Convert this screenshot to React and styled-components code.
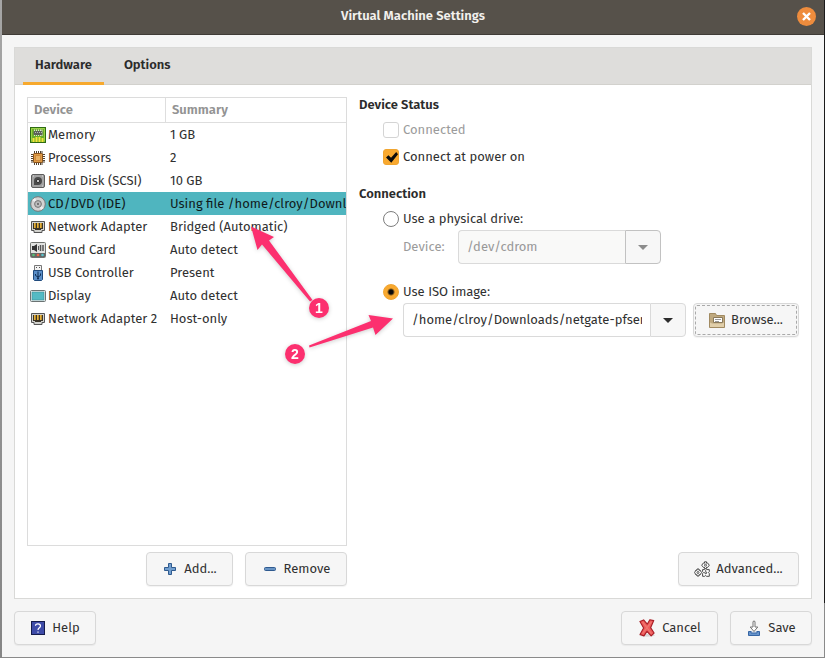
import React, { useState } from "react";
import styled, { createGlobalStyle, css } from "styled-components";

const GlobalStyle = createGlobalStyle`
  *, *::before, *::after { box-sizing: border-box; }
  body { margin: 0; }
  body, button, input, table {
    font-family: "Fira Sans", "Noto Sans", sans-serif;
    font-size: 13px;
    line-height: 20px;
    color: #303030;
  }
`;

const Desktop = styled.div`
  position: relative;
  display: flex;
  min-height: 100vh;
  padding: 0 1px 1px 2px;
  background:
    linear-gradient(#1b1b1b, #1b1b1b) right top / 1px calc(100% - 55px) no-repeat,
    linear-gradient(#a6a6a6, #858585) left top / 2px 100% no-repeat,
    #8a8a8a;
`;

const Dialog = styled.main`
  flex: 1;
  min-width: 0;
  display: flex;
  flex-direction: column;
  background: #f5f5f5;
`;

const TitleBar = styled.header`
  display: grid;
  grid-template-columns: 1fr auto 1fr;
  align-items: center;
  height: 35px;
  padding: 0 8px 2px;
  background: #56514a;
  border-bottom: 1px solid #3f3b36;
`;

const Title = styled.h1`
  grid-column: 2;
  margin: 0;
  font-size: 13px;
  font-weight: 600;
  color: #f2f0ed;
`;

const CloseButton = styled.button`
  justify-self: end;
  display: flex;
  width: 19px;
  height: 19px;
  padding: 0;
  border: 0;
  border-radius: 50%;
  background: #ee8c3d;
`;

const Content = styled.div`
  flex: 1;
  display: flex;
  flex-direction: column;
  gap: 12px;
  padding: 12px;
`;

const Notebook = styled.section`
  flex: 1;
  display: flex;
  flex-direction: column;
  border: 1px solid #d9d9d7;
  background: #fff;
`;

const TabList = styled.div`
  display: flex;
  height: 37px;
  padding: 0 8px;
  background: #dedddb;
  border-bottom: 1px solid #d2d1cd;
`;

const Tab = styled.button`
  height: 37px;
  padding: 0 12px;
  margin-right: 8px;
  border: 0;
  border-bottom: 3px solid ${(p) => (p.$active ? "#f7a92e" : "transparent")};
  background: none;
  font-weight: 600;
  color: #2b2b2b;
`;

const Page = styled.div`
  flex: 1;
  display: grid;
  grid-template-columns: minmax(0, 8fr) minmax(0, 11fr);
  gap: 12px;
  padding: 12px;
`;

const Column = styled.div`
  display: flex;
  flex-direction: column;
  gap: 6px;
`;

const DeviceList = styled.div`
  flex: 1;
  border: 1px solid #dcdcdc;
  background: #fff;
`;

const DeviceTable = styled.table`
  width: 100%;
  table-layout: fixed;
  border-collapse: separate;
  border-spacing: 0;
`;

const HeadCell = styled.th`
  width: ${(p) => (p.$first ? "138px" : "auto")};
  height: 25px;
  padding: 0 6px;
  border-bottom: 1px solid #dedede;
  border-right: ${(p) => (p.$first ? "1px solid #dedede" : "0")};
  text-align: left;
  font-weight: 600;
  color: #939393;
`;

const DeviceRow = styled.tr`
  background: ${(p) => (p.$selected ? "#4fb5bf" : "transparent")};
  color: ${(p) => (p.$selected ? "#101a1b" : "inherit")};
`;

const Cell = styled.td`
  height: 23px;
  padding: 0 0 0 4px;
  overflow: hidden;
  white-space: nowrap;
`;

const NameCell = styled(Cell)`
  padding: 0 0 0 2px;
  overflow: visible;
`;

const DeviceName = styled.span`
  display: flex;
  align-items: center;
  gap: 2px;
`;

const ButtonRow = styled.div`
  display: flex;
  justify-content: flex-end;
  gap: 12px;
`;

const Footer = styled.footer`
  display: flex;
  gap: 12px;
`;

const PushButton = styled.button`
  display: flex;
  align-items: center;
  justify-content: center;
  gap: 6px;
  flex: none;
  height: 34px;
  min-width: 82px;
  padding: 0;
  border: 1px solid #d8d8d8;
  border-radius: 4px;
  background: #f6f6f6;
  box-shadow: 0 1px 1px rgba(0, 0, 0, 0.05);
  white-space: nowrap;
  width: ${(p) => p.$width}px;
  margin-right: ${(p) => (p.$pushRest ? "auto" : "0")};
  ${(p) =>
    p.$focused &&
    css`
      outline: 1px dashed #a9a9a9;
      outline-offset: -3px;
    `}
`;

const Settings = styled.div`
  flex: 1;
  display: flex;
  flex-direction: column;
  gap: 19px;
`;

const Group = styled.section`
  display: flex;
  flex-direction: column;
  gap: 7px;
`;

const GroupTitle = styled.h2`
  margin: 0;
  font-size: 13px;
  line-height: 16px;
  font-weight: 600;
  color: #2b2b2b;
`;

const Choices = styled.div`
  display: flex;
  flex-direction: column;
  gap: ${(p) => (p.$gap)}px;
  padding-left: 24px;
`;

const Choice = styled.label`
  display: flex;
  align-items: center;
  gap: 4px;
  color: ${(p) => (p.$disabled ? "#9b9b9b" : "inherit")};
`;

const CheckBox = styled.input.attrs({ type: "checkbox" })`
  appearance: none;
  width: 16px;
  height: 16px;
  margin: 0;
  border: 1px solid #d4d4d4;
  border-radius: 3px;
  background: #fff;
  display: grid;
  &:checked {
    border-color: #f0a530;
    background: #f9a92f;
  }
  &:checked::before {
    content: "";
    margin: 2px 0 1px 2px;
    background: #0b0b0b;
    clip-path: polygon(0 50%, 20% 30%, 42% 52%, 85% 0, 100% 20%, 44% 98%);
  }
`;

const Radio = styled.input.attrs({ type: "radio" })`
  appearance: none;
  width: 16px;
  height: 16px;
  margin: 0;
  border: 1px solid #7d7d7d;
  border-radius: 50%;
  background: #fff;
  &:checked {
    border-color: #f0a530;
    background: radial-gradient(circle, #0b0b0b 2px, #f9a92f 4px);
  }
`;

const Option = styled.div`
  display: flex;
  flex-direction: column;
  gap: 1px;
`;

const FieldRow = styled.div`
  display: flex;
  align-items: center;
  gap: 7px;
  padding-left: 20px;
`;

const FieldLabel = styled.label`
  width: 48px;
  color: #9b9b9b;
`;

const Combo = styled.div`
  display: flex;
  height: 34px;
  min-width: 0;
  flex: ${(p) => (p.$fill ? "1" : "0 1 203px")};
`;

const ComboInput = styled.input`
  flex: 1;
  min-width: 0;
  padding: 0 8px;
  border: 1px solid #dadada;
  border-right: 0;
  border-radius: 4px 0 0 4px;
  background: #fff;
  &:disabled {
    background: #f9f9f8;
    color: #989898;
  }
`;

const ComboArrow = styled.button`
  display: flex;
  align-items: center;
  justify-content: center;
  width: 36px;
  padding: 0;
  border: 1px solid #dadada;
  border-radius: 0 4px 4px 0;
  background: #f7f7f7;
  color: #2d2d2d;
  &:disabled {
    border-color: #c2c2c2;
    color: #8c8c8c;
  }
`;

const Callouts = styled.svg`
  position: absolute;
  left: 240px;
  top: 215px;
  pointer-events: none;
  filter: drop-shadow(0 1px 2px rgba(0, 0, 0, 0.2));
  font: bold 14px "Liberation Sans", sans-serif;
`;

const Glyph = styled.svg.attrs({ viewBox: "0 0 16 16", fill: "none", "aria-hidden": true })`
  flex: none;
  width: ${(p) => (p.$large ? 18 : 16)}px;
  height: ${(p) => (p.$large ? 18 : 16)}px;
`;

const MemoryIcon = () => (
  <Glyph>
    <rect x=".5" y=".5" width="15" height="15" fill="#6cae28" stroke="#2e6b12" />
    <path d="M1.500 14.500V1.500H14.500V14.500" stroke="#9bd447" />
    <path d="M4.500 2.500V9M6.500 2.500V9M8.500 2.500V9M10.500 2.500V9M12 2.500V9" stroke="#dcdcdc" />
    <rect x="3.500" y="4" width="9" height="4" rx="1" fill="#5c6259" />
    <path d="M5 5.500H12" stroke="#b9bdb5" strokeDasharray="1 1" />
    <path d="M3.500 15V11M6.500 15V10M9.500 15V10M12.500 15V11" stroke="#f4e43c" strokeWidth="2" />
  </Glyph>
);

const ProcessorIcon = () => (
  <Glyph>
    <path d="M4.500 1V15M6.500 1V15M8.500 1V15M10.500 1V15M12 1V15M1 4.500H15M1 6.500H15M1 8.500H15M1 10.500H15M1 12H15" stroke="#514331" />
    <rect x="3.500" y="3.500" width="9" height="9" rx="1" fill="#dd9b45" stroke="#8b521b" />
    <rect x="5.500" y="5.500" width="5" height="5" fill="#e9b162" stroke="#cf883b" />
  </Glyph>
);

const DiskIcon = () => (
  <Glyph>
    <rect x="1.500" y="1.500" width="13" height="13" rx="1.500" fill="#a2a2a2" stroke="#5d5d5d" />
    <path d="M4 8a4 4 0 1 1 4 4H4Z" fill="#4a4a4a" />
    <circle cx="8" cy="8" r="1.700" fill="#c5c5c5" stroke="#353535" />
    <path d="M3 3h1M12 3h1M12 13h1" stroke="#ddd" />
  </Glyph>
);

const DiscIcon = () => (
  <Glyph>
    <circle cx="8" cy="8" r="7.300" fill="#d2d2d2" stroke="#777" />
    <path d="M8 8 2 4 5 2ZM8 8l6 4-3 2Z" fill="#efefef" />
    <circle cx="8" cy="8" r="3.400" fill="#b7b7b7" stroke="#777" />
    <circle cx="8" cy="8" r="1.400" fill="#444" stroke="#eee" strokeWidth=".6" />
  </Glyph>
);

const NetworkIcon = () => (
  <Glyph>
    <path d="M1.500 2.500h13v9H12v2H4v-2H1.500Z" fill="#d2d2ce" stroke="#555" />
    <path d="M3 4h10v6h-2v1H5v-1H3Z" fill="#3b3427" />
    <path d="M5 4v5M8 4v5M11 4v5" stroke="#e3b13c" strokeWidth="2" />
    <path d="M5.500 4v5M8.500 4v5M11.500 4v5" stroke="#b78a28" />
  </Glyph>
);

const SoundIcon = () => (
  <Glyph>
    <rect x=".5" y=".5" width="15" height="15" rx="1" fill="#e2e3e1" stroke="#70736f" />
    <path d="M2 4h2l3-2v8L4 8H2Z" fill="#333" />
    <path d="M8.500 4v4" stroke="#555" />
    <path d="M10.500 3v6M13 3v6" stroke="#555" strokeWidth="1.500" />
    <path d="M1 11h14v4H1Z" fill="#666" />
    <circle cx="3.500" cy="13" r="1.300" fill="#52c174" />
    <circle cx="8" cy="13" r="1.300" fill="#f16745" />
    <circle cx="12.500" cy="13" r="1.300" fill="#59c4cc" />
  </Glyph>
);

const UsbIcon = () => (
  <Glyph>
    <path d="M4.500 5V.5h7V5" fill="#f2f2f2" stroke="#777" />
    <path d="M6 2h1v1H6ZM9 2h1v1H9Z" fill="#555" />
    <path d="M3.500 5.500h9v9l-1 1h-7l-1-1Z" fill="#5b8fc8" stroke="#214b7d" />
    <path d="M8 6.500V14M5.500 9v1.500L8 12l2.500-1.500V8.500" stroke="#102f55" />
    <circle cx="8" cy="13.500" r="1" fill="#102f55" />
  </Glyph>
);

const DisplayIcon = () => (
  <Glyph>
    <rect x=".5" y="2.500" width="15" height="11" rx="1" fill="#eee" stroke="#6b7373" />
    <rect x="2" y="4" width="12" height="8" fill="#54bac4" stroke="#398c94" strokeWidth=".6" />
  </Glyph>
);

const AddIcon = () => (
  <Glyph>
    <path d="M6.500 2.500h3v4h4v3h-4v4h-3v-4h-4v-3h4Z" fill="#729fcf" stroke="#2f5a8f" strokeLinejoin="round" />
  </Glyph>
);

const RemoveIcon = () => (
  <Glyph>
    <rect x="2.500" y="6.500" width="11" height="3" rx="1" fill="#6894c4" stroke="#2f5a8f" />
  </Glyph>
);

const FolderIcon = () => (
  <Glyph>
    <path d="M.5 15.500v-14h6l1 2h8v12Z" fill="#bfa97f" stroke="#a18a61" strokeLinejoin="round" />
    <path d="M4.500 5.500h9v5h-9Z" fill="#fff" stroke="#89795b" />
    <path d="M6 7.500h6M6 9.500h4" stroke="#999" />
    <path d="M1 15V10.500l2 1h10l2-1V15Z" fill="#e1cfaa" />
  </Glyph>
);

const GearsIcon = () => (
  <Glyph>
    <g stroke="#4a4a4a" fill="#fff" strokeLinejoin="round">
      <path d="M10.500 .8h2v1.400l1-.3 1.800 2.300-1.800 2.300-1-.3v1.400h-2V6.200l-1 .3L7.700 4.200l1.800-2.300 1 .3Z" />
      <path d="M3 8h2v1.300l1-.3 1.500 2.500L6 14l-1-.3V15H3v-1.300L2 14 .6 11.500 2 9l1 .3Z" />
      <path d="M8.600 8.600h2l1 .8 1-.8h2.700v2l-.8 1 .8 1v2.700h-2.700l-1-.8-1 .8h-2v-2.700l.8-1-.8-1Z" />
    </g>
    <circle cx="11.500" cy="4.200" r="1" stroke="#555" />
    <circle cx="4" cy="11.500" r="1" stroke="#555" />
    <circle cx="11.700" cy="11.700" r="1" stroke="#444" />
  </Glyph>
);

const HelpIcon = () => (
  <Glyph>
    <rect x="1.500" y="1.500" width="13" height="13" fill="#3e4ba8" stroke="#151c4b" />
    <path d="M5.500 5.800C5.500 3.200 10.500 3.200 10.500 6 10.500 7.800 8 7.800 8 10M8 11.500v1.300" stroke="#fff" strokeWidth="1.200" />
  </Glyph>
);

const CancelIcon = () => (
  <Glyph $large>
    <ellipse cx="8" cy="14.500" rx="7" ry="1.200" fill="#d9d9d9" />
    <path d="M1.700 2.200 5 .8 8.200 4.600 10.500 .7 14 1.400 11.200 7.700 14.300 12.500 11.700 15 8 11 5.300 15 1.800 13.800 5 8Z" fill="#ee5a5a" stroke="#a71d25" strokeLinejoin="round" />
    <path d="M4 2.500 12 13M12 2.500 4 13" stroke="#f07771" />
  </Glyph>
);

const SaveIcon = () => (
  <Glyph>
    <path d="M2.500 11.500h11v4h-11Z" fill="#6794cb" stroke="#3565a4" />
    <path d="M5 11v2h6v-2" fill="#dbe5f1" stroke="#3565a4" />
    <path d="M7 1.500Q8 .5 9 1.500V7h2.800L8 11.500 4.200 7H7Z" fill="#fff" stroke="#747474" strokeLinejoin="round" />
  </Glyph>
);

const Caret = () => (
  <svg width="10" height="5" viewBox="0 0 10 5" aria-hidden="true">
    <path d="M0 0h10L5 5Z" fill="currentColor" />
  </svg>
);

const devices = [
  ["Memory", "1 GB", MemoryIcon],
  ["Processors", "2", ProcessorIcon],
  ["Hard Disk (SCSI)", "10 GB", DiskIcon],
  ["CD/DVD (IDE)", "Using file /home/clroy/Downloads", DiscIcon],
  ["Network Adapter", "Bridged (Automatic)", NetworkIcon],
  ["Sound Card", "Auto detect", SoundIcon],
  ["USB Controller", "Present", UsbIcon],
  ["Display", "Auto detect", DisplayIcon],
  ["Network Adapter 2", "Host-only", NetworkIcon],
];

export default function App() {
  const [selected, setSelected] = useState(3);
  const [powerOn, setPowerOn] = useState(true);
  const [source, setSource] = useState("iso");
  const [iso, setIso] = useState("/home/clroy/Downloads/netgate-pfsense.iso");

  return (
    <Desktop>
      <GlobalStyle />
      <Dialog>
        <TitleBar>
          <Title>Virtual Machine Settings</Title>
          <CloseButton aria-label="Close">
            <svg width="19" height="19" viewBox="0 0 19 19" aria-hidden="true">
              <path d="M6 6l7 7M13 6l-7 7" stroke="#fff" strokeWidth="2.400" />
            </svg>
          </CloseButton>
        </TitleBar>
        <Content>
          <Notebook>
            <TabList role="tablist">
              <Tab role="tab" aria-selected="true" $active>Hardware</Tab>
              <Tab role="tab" aria-selected="false">Options</Tab>
            </TabList>
            <Page role="tabpanel">
              <Column>
                <DeviceList>
                  <DeviceTable>
                    <thead>
                      <tr>
                        <HeadCell $first scope="col">Device</HeadCell>
                        <HeadCell scope="col">Summary</HeadCell>
                      </tr>
                    </thead>
                    <tbody>
                      {devices.map(([name, summary, Icon], i) => (
                        <DeviceRow key={name} $selected={i === selected} onClick={() => setSelected(i)}>
                          <NameCell>
                            <DeviceName><Icon />{name}</DeviceName>
                          </NameCell>
                          <Cell>{summary}</Cell>
                        </DeviceRow>
                      ))}
                    </tbody>
                  </DeviceTable>
                </DeviceList>
                <ButtonRow>
                  <PushButton $width={87}><AddIcon />Add...</PushButton>
                  <PushButton $width={102}><RemoveIcon />Remove</PushButton>
                </ButtonRow>
              </Column>
              <Column>
                <Settings>
                  <Group>
                    <GroupTitle>Device Status</GroupTitle>
                    <Choices $gap={7}>
                      <Choice $disabled><CheckBox disabled />Connected</Choice>
                      <Choice>
                        <CheckBox checked={powerOn} onChange={(e) => setPowerOn(e.target.checked)} />
                        Connect at power on
                      </Choice>
                    </Choices>
                  </Group>
                  <Group>
                    <GroupTitle>Connection</GroupTitle>
                    <Choices $gap={18}>
                      <Option>
                        <Choice>
                          <Radio name="source" checked={source === "drive"} onChange={() => setSource("drive")} />
                          Use a physical drive:
                        </Choice>
                        <FieldRow>
                          <FieldLabel htmlFor="drive">Device:</FieldLabel>
                          <Combo>
                            <ComboInput id="drive" defaultValue="/dev/cdrom" disabled />
                            <ComboArrow aria-label="Choose device" disabled><Caret /></ComboArrow>
                          </Combo>
                        </FieldRow>
                      </Option>
                      <Option>
                        <Choice>
                          <Radio name="source" checked={source === "iso"} onChange={() => setSource("iso")} />
                          Use ISO image:
                        </Choice>
                        <FieldRow>
                          <Combo $fill>
                            <ComboInput aria-label="ISO image" value={iso} onChange={(e) => setIso(e.target.value)} />
                            <ComboArrow aria-label="Recent images"><Caret /></ComboArrow>
                          </Combo>
                          <PushButton $width={106} $focused><FolderIcon />Browse...</PushButton>
                        </FieldRow>
                      </Option>
                    </Choices>
                  </Group>
                </Settings>
                <ButtonRow>
                  <PushButton $width={121}><GearsIcon />Advanced...</PushButton>
                </ButtonRow>
              </Column>
            </Page>
          </Notebook>
          <Footer>
            <PushButton $width={82} $pushRest><HelpIcon />Help</PushButton>
            <PushButton $width={97}><CancelIcon />Cancel</PushButton>
            <PushButton $width={82}><SaveIcon />Save</PushButton>
          </Footer>
        </Content>
      </Dialog>
      <Callouts width="160" height="155" viewBox="240 215 160 155">
        <g fill="#fc306f">
          <path d="M251 226.500 274 237 269 240.500 312.500 300 310 301.500 262 244.500 257.500 250Z" />
          <path d="M393 318.500 368.500 315 371 321 309 345.500 309.500 347.500 373 327.500 375.500 335Z" />
          <circle cx="319" cy="308" r="10" />
          <circle cx="295" cy="354" r="10" />
        </g>
        <g fill="#fff" textAnchor="middle">
          <text x="319" y="313">1</text>
          <text x="295" y="359">2</text>
        </g>
      </Callouts>
    </Desktop>
  );
}
